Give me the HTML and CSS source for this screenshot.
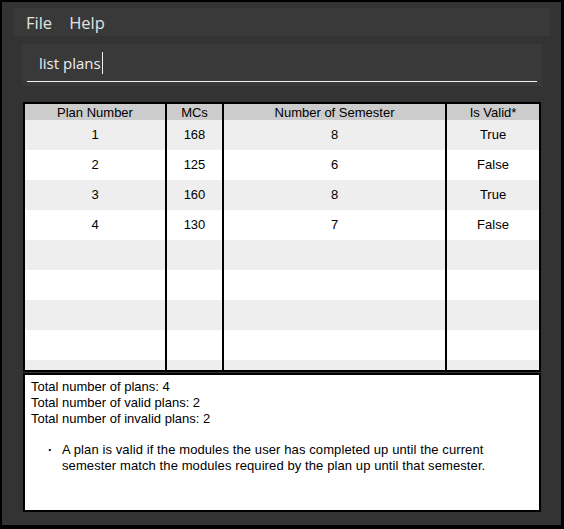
FILE: index.html
```html
<!DOCTYPE html>
<html>
<head>
<meta charset="utf-8">
<link rel="stylesheet" href="styles.css">
</head>
<body>
<div class="frame">
  <div class="menubar">
    <span class="menu-item">File</span>
    <span class="menu-item">Help</span>
  </div>
  <div class="content">
    <div class="command">
      <div class="command-text">list plans<span class="caret"></span></div>
      <div class="command-line"></div>
    </div>
    <div class="table">
      <div class="row head">
        <div class="cell">Plan Number</div>
        <div class="cell">MCs</div>
        <div class="cell">Number of Semester</div>
        <div class="cell">Is Valid*</div>
      </div>
      <div class="row odd"><div class="cell">1</div><div class="cell">168</div><div class="cell">8</div><div class="cell">True</div></div>
      <div class="row even"><div class="cell">2</div><div class="cell">125</div><div class="cell">6</div><div class="cell">False</div></div>
      <div class="row odd"><div class="cell">3</div><div class="cell">160</div><div class="cell">8</div><div class="cell">True</div></div>
      <div class="row even"><div class="cell">4</div><div class="cell">130</div><div class="cell">7</div><div class="cell">False</div></div>
      <div class="row odd"><div class="cell"></div><div class="cell"></div><div class="cell"></div><div class="cell"></div></div>
      <div class="row even"><div class="cell"></div><div class="cell"></div><div class="cell"></div><div class="cell"></div></div>
      <div class="row odd"><div class="cell"></div><div class="cell"></div><div class="cell"></div><div class="cell"></div></div>
      <div class="row even"><div class="cell"></div><div class="cell"></div><div class="cell"></div><div class="cell"></div></div>
      <div class="row odd partial"><div class="cell"></div><div class="cell"></div><div class="cell"></div><div class="cell"></div></div>
    </div>
    <div class="summary">
      <div class="summary-line">Total number of plans: 4</div>
      <div class="summary-line">Total number of valid plans: 2</div>
      <div class="summary-line">Total number of invalid plans: 2</div>
      <ul class="notes">
        <li>A plan is valid if the modules the user has completed up until the current semester match the modules required by the plan up until that semester.</li>
      </ul>
    </div>
  </div>
</div>
</body>
</html>
```
FILE: styles.css
```css
html, body {
  margin: 0;
  padding: 0;
  background: #333333;
}
.frame {
  box-sizing: border-box;
  width: 564px;
  height: 529px;
  background: #333333;
  border: 2px solid #000;
  border-right-width: 3px;
  border-bottom-width: 4px;
  padding: 6px 11px 0 12px;
  display: flex;
  flex-direction: column;
}
.menubar {
  height: 28px;
  background: #393939;
  display: flex;
  align-items: center;
  padding-left: 12px;
  gap: 17px;
  font-family: "Open Sans", "Noto Sans", sans-serif;
  font-size: 16.5px;
  color: #e2e2e2;
}
.content {
  padding: 0 8px;
  display: flex;
  flex-direction: column;
}
.command {
  margin-top: 8px;
  height: 42px;
  background: #393939;
  box-sizing: border-box;
  padding: 0 5px;
  display: flex;
  flex-direction: column;
}
.command-text {
  font-family: "Open Sans", "Noto Sans", sans-serif;
  font-size: 15px;
  color: #f0f0f0;
  padding-left: 12px;
  height: 37px;
  display: flex;
  align-items: center;
}
.caret {
  display: inline-block;
  width: 1px;
  height: 22px;
  background: #f0f0f0;
  margin-left: 1px;
}
.command-line {
  height: 1px;
  background: #f0f0f0;
}
.table {
  margin: 16px 1px 0 1px;
  border: 2px solid #000;
  height: 266px;
  overflow: hidden;
  background: #000;
  display: flex;
  flex-direction: column;
  font-family: "Liberation Sans", Arial, sans-serif;
  font-size: 13px;
  color: #000;
}
.row {
  display: grid;
  grid-template-columns: 140px 55px 221px 92px;
  column-gap: 2px;
  height: 30px;
  flex: none;
}
.row.head {
  height: 16px;
}
.cell {
  display: flex;
  align-items: center;
  justify-content: center;
  padding-bottom: 1px;
}
.head .cell { background: #cccccc; padding-bottom: 0; }
.odd .cell { background: #eeeeee; }
.even .cell { background: #ffffff; }
.summary {
  margin: 1px 1px 0 1px;
  height: 139px;
  box-sizing: border-box;
  border: 2px solid #000;
  background: #fff;
  padding: 4px 6px 0 6px;
  font-family: "Liberation Sans", Arial, sans-serif;
  font-size: 13px;
  line-height: 16px;
  color: #000;
}
.notes {
  margin: 15px 0 0 0;
  padding-left: 31px;
  list-style: none;
  letter-spacing: 0.1px;
}
.notes li {
  position: relative;
}
.notes li::before {
  content: "\00B7";
  position: absolute;
  left: -14px;
  top: 0;
  font-weight: bold;
}
```
